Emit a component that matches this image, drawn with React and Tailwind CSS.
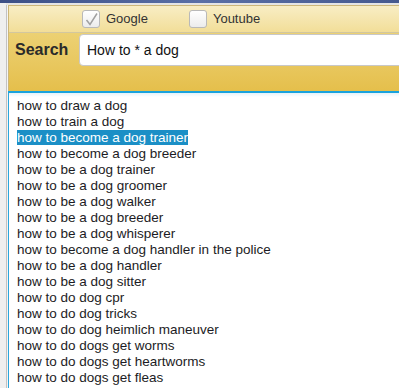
const suggestions = [
  "how to draw a dog",
  "how to train a dog",
  "how to become a dog trainer",
  "how to become a dog breeder",
  "how to be a dog trainer",
  "how to be a dog groomer",
  "how to be a dog walker",
  "how to be a dog breeder",
  "how to be a dog whisperer",
  "how to become a dog handler in the police",
  "how to be a dog handler",
  "how to be a dog sitter",
  "how to do dog cpr",
  "how to do dog tricks",
  "how to do dog heimlich maneuver",
  "how to do dogs get worms",
  "how to do dogs get heartworms",
  "how to do dogs get fleas",
];

function Checkbox({ checked }) {
  return (
    <div className="w-[18px] h-[18px] rounded-[3px] border border-[#b9b9b9] bg-gradient-to-b from-white to-[#ececec] flex items-center justify-center">
      {checked && (
        <svg width="15" height="15" viewBox="0 0 15 15">
          <path d="M2.5 8 L6 12.5 L13 1.5" fill="none" stroke="#a0a0a0" strokeWidth="1.5" />
        </svg>
      )}
    </div>
  );
}

export default function App() {
  return (
    <div className="w-[399px] h-[388px] overflow-hidden bg-white font-['Liberation_Sans',Arial,sans-serif]">
      <div className="h-[3px] bg-gradient-to-r from-[#3c4f86] via-[#5a6fa6] to-[#46598f]" />
      <div className="flex h-[385px]">
        {/* left frame */}
        <div className="w-[6px] bg-[#efefef]" />
        <div className="w-[1px] bg-[#c2c2c2]" />
        <div className="w-[1px] bg-[#f4f4f4]" />

        <div className="flex-1 flex flex-col min-w-0">
          <div className="h-[2px] bg-[#e4e4e4] -ml-[2px]" />
          {/* header */}
          <div className="border-t border-l border-[#cdb678]">
            <div className="h-[26px] bg-gradient-to-b from-[#f8edc4] to-[#f2de98] flex items-center text-[13px] text-[#333]">
              <div className="ml-[73px]"><Checkbox checked /></div>
              <span className="ml-[6px]">Google</span>
              <div className="ml-[41px]"><Checkbox /></div>
              <span className="ml-[6px]">Youtube</span>
            </div>
            <div className="h-[1px] bg-[#d2c79f]" />
            <div className="h-[58px] bg-gradient-to-b from-[#ecd173] to-[#e5bf4b] pt-[1px]">
              <div className="flex items-center">
                <span className="ml-[6px] w-[64px] text-[16px] font-bold text-[#2a2a2a]">Search</span>
                <div className="flex-1 h-[32px] -mr-[6px] bg-white border border-[#c8c8c8] rounded-[4px] flex items-center pl-[7px] text-[14px] text-[#111]">
                  How to * a dog
                </div>
              </div>
            </div>
          </div>
          <div className="h-[2px] bg-[#1aa3dd]" />
          {/* suggestions */}
          <div className="flex-1 border-l border-[#2aa6dc] bg-gradient-to-b from-[#e6f3fa] to-white to-[4px] pt-[5px] pl-[8px] text-[13.5px] leading-[16px] text-[#1c1c24]">
            {suggestions.map((s, i) => (
              <div key={i} className="whitespace-nowrap">
                {i === 2 ? <span className="bg-[#1b8fc6] text-white">{s}</span> : s}
              </div>
            ))}
          </div>
        </div>
      </div>
    </div>
  );
}
